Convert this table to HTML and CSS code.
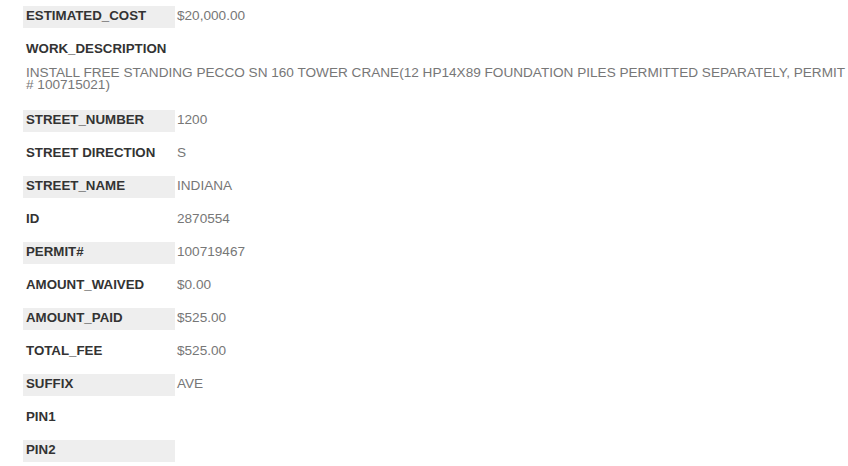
FILE: index.html
```html
<!DOCTYPE html>
<html>
<head>
<meta charset="utf-8">
<link rel="stylesheet" href="styles.css">
</head>
<body>
<div class="record">
  <div class="row"><div class="label shaded">ESTIMATED_COST</div><div class="value">$20,000.00</div></div>
  <div class="block">
    <div class="block-title">WORK_DESCRIPTION</div>
    <div class="block-text">INSTALL FREE STANDING PECCO SN 160 TOWER CRANE(12 HP14X89 FOUNDATION PILES PERMITTED SEPARATELY, PERMIT # 100715021)</div>
  </div>
  <div class="row"><div class="label shaded">STREET_NUMBER</div><div class="value">1200</div></div>
  <div class="row"><div class="label">STREET DIRECTION</div><div class="value">S</div></div>
  <div class="row"><div class="label shaded">STREET_NAME</div><div class="value">INDIANA</div></div>
  <div class="row"><div class="label">ID</div><div class="value">2870554</div></div>
  <div class="row"><div class="label shaded">PERMIT#</div><div class="value">100719467</div></div>
  <div class="row"><div class="label">AMOUNT_WAIVED</div><div class="value">$0.00</div></div>
  <div class="row"><div class="label shaded">AMOUNT_PAID</div><div class="value">$525.00</div></div>
  <div class="row"><div class="label">TOTAL_FEE</div><div class="value">$525.00</div></div>
  <div class="row"><div class="label shaded">SUFFIX</div><div class="value">AVE</div></div>
  <div class="row"><div class="label">PIN1</div><div class="value"></div></div>
  <div class="row"><div class="label shaded">PIN2</div><div class="value"></div></div>
</div>
</body>
</html>
```
FILE: styles.css
```css
html, body {
  margin: 0;
  padding: 0;
  background: #ffffff;
}
body {
  font-family: "Liberation Sans", Arial, sans-serif;
}
.record {
  padding: 6px 0 0 23px;
  display: flex;
  flex-direction: column;
  gap: 11px;
}
.row {
  display: flex;
  align-items: flex-start;
}
.label {
  width: 149px;
  height: 22px;
  box-sizing: content-box;
  padding: 0 0 0 3px;
  font-size: 13.3px;
  font-weight: bold;
  line-height: 19px;
  color: #333333;
  white-space: nowrap;
}
.label.shaded {
  background: #eeeeee;
}
.value {
  padding-left: 2px;
  font-size: 13.6px;
  line-height: 19px;
  color: #777777;
}
.block {
  display: flex;
  flex-direction: column;
  padding-left: 3px;
  padding-bottom: 8px;
}
.block-title {
  font-size: 13.3px;
  font-weight: bold;
  line-height: 19px;
  color: #333333;
}
.block-text {
  margin-top: 9px;
  font-size: 13.6px;
  line-height: 12px;
  color: #777777;
}
```
